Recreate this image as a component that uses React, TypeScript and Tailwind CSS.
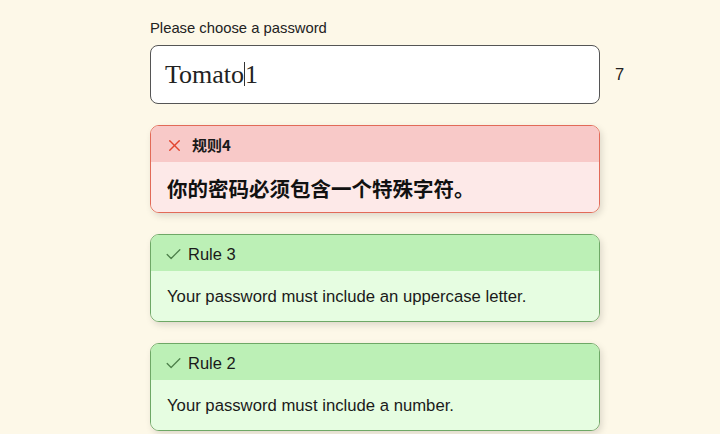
import { Check, X } from "lucide-react";

type Rule = {
  id: number;
  title: string;
  text: string;
  ok: boolean;
};

const rules: Rule[] = [
  { id: 4, title: "规则4", text: "你的密码必须包含一个特殊字符。", ok: false },
  { id: 3, title: "Rule 3", text: "Your password must include an uppercase letter.", ok: true },
  { id: 2, title: "Rule 2", text: "Your password must include a number.", ok: true },
];

const cjkFont = "font-['Noto_Sans_CJK_SC','Noto_Sans_CJK_JP',sans-serif]";

function RuleCard({ rule }: { rule: Rule }) {
  if (!rule.ok) {
    return (
      <div className="overflow-hidden rounded-[9px] border border-[#e26a58] shadow-[2px_3px_7px_rgba(0,0,0,0.13)]">
        <div className="flex h-[36px] items-center gap-[8px] bg-[#f8c9c8] pl-[14px] pt-[2px]">
          <X className="h-[19px] w-[19px] text-[#e2452f]" strokeWidth={1.8} />
          <span className={`${cjkFont} text-[15px] font-bold text-[#1a1a1a]`}>{rule.title}</span>
        </div>
        <div className="flex h-[50px] items-center bg-[#fde9e8] pl-[16px] pt-[2px]">
          <span className={`${cjkFont} text-[20.5px] font-bold text-[#111]`}>{rule.text}</span>
        </div>
      </div>
    );
  }
  return (
    <div className="overflow-hidden rounded-[9px] border border-[#6ea866] shadow-[2px_3px_7px_rgba(0,0,0,0.13)]">
      <div className="flex h-[36px] items-center gap-[5px] bg-[#bcf0b6] pl-[13px] pt-[3px]">
        <Check className="h-[19px] w-[19px] text-[#4d7f4a]" strokeWidth={1.6} />
        <span className="text-[16.5px] text-[#1a1a1a]">{rule.title}</span>
      </div>
      <div className="flex h-[50px] items-center bg-[#e6fde1] pl-[16px] pt-[2px]">
        <span className="text-[16.7px] text-[#1a1a1a]">{rule.text}</span>
      </div>
    </div>
  );
}

export default function App() {
  const value = "Tomato1";
  const caret = 6;

  return (
    <div className="min-h-[434px] w-full bg-[#fdf8e8] pl-[150px] pt-[19px] font-['Liberation_Sans',Arial,sans-serif]">
      <div className="flex w-[480px] items-start">
        <div className="w-[450px]">
          <label className="block text-[14.8px] leading-[18px] text-[#222]">Please choose a password</label>
          <div className="mt-[8px] flex h-[59px] items-center rounded-[8px] border border-[#555] bg-white pl-[14px]">
            <span className="font-['Liberation_Serif',serif] text-[26px] text-[#222]">
              {value.slice(0, caret)}
              <span className="inline-block h-[24px] w-px translate-y-[3px] bg-[#333] align-baseline" />
              {value.slice(caret)}
            </span>
          </div>
        </div>
        <span className="ml-[15px] mt-[43px] text-[16.5px] leading-[24px] text-[#222]">{value.length}</span>
      </div>

      <div className="mt-[21px] flex w-[450px] flex-col gap-[21px]">
        {rules.map((r) => (
          <RuleCard key={r.id} rule={r} />
        ))}
      </div>
    </div>
  );
}
